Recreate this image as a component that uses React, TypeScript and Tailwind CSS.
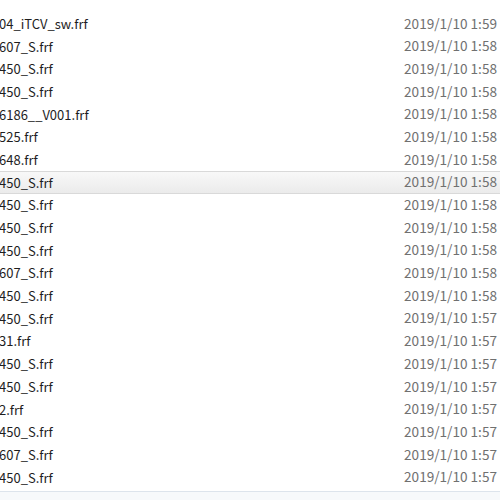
import React from "react";

const rows: { name: string; time: string; sel?: boolean }[] = [
  { name: "04_iTCV_sw.frf", time: "1:59" },
  { name: "607_S.frf", time: "1:58" },
  { name: "450_S.frf", time: "1:58" },
  { name: "450_S.frf", time: "1:58" },
  { name: "6186__V001.frf", time: "1:58" },
  { name: "525.frf", time: "1:58" },
  { name: "648.frf", time: "1:58" },
  { name: "450_S.frf", time: "1:58", sel: true },
  { name: "450_S.frf", time: "1:58" },
  { name: "450_S.frf", time: "1:58" },
  { name: "450_S.frf", time: "1:58" },
  { name: "607_S.frf", time: "1:58" },
  { name: "450_S.frf", time: "1:58" },
  { name: "450_S.frf", time: "1:57" },
  { name: "31.frf", time: "1:57" },
  { name: "450_S.frf", time: "1:57" },
  { name: "450_S.frf", time: "1:57" },
  { name: "2.frf", time: "1:57" },
  { name: "450_S.frf", time: "1:57" },
  { name: "607_S.frf", time: "1:57" },
  { name: "450_S.frf", time: "1:57" },
];

export default function App() {
  return (
    <div
      className="w-[500px] h-[500px] overflow-hidden bg-white flex flex-col"
      style={{ fontFamily: '"Noto Sans CJK SC", "Noto Sans", sans-serif' }}
    >
      <div className="pt-[12px] flex flex-col">
        {rows.map((r, i) => (
          <div
            key={i}
            className={
              "h-[22.7px] flex items-center justify-between border-y " +
              (r.sel
                ? "border-[#d9d9d9] bg-gradient-to-b from-[#f8f8f8] to-[#ebebeb]"
                : "border-transparent")
            }
          >
            <span className="ml-[-1px] text-[13px] text-[#1e1e1e] whitespace-nowrap leading-none">
              {r.name}
            </span>
            <span className="mr-[3px] text-[13.6px] text-[#707070] whitespace-nowrap leading-none">
              2019/1/10 {r.time}
            </span>
          </div>
        ))}
      </div>
      <div className="mt-[3px] border-t border-[#dde4ec] flex-1 bg-[#f7f9fb]" />
    </div>
  );
}
